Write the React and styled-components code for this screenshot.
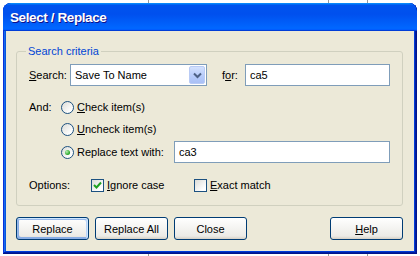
import styled, { createGlobalStyle } from "styled-components";

const GlobalStyle = createGlobalStyle`
    html, body {
        margin: 0;
        padding: 0;
        background-color: #ffffff;
        background-image:
            linear-gradient(90deg, transparent 148px, #9a9a9a 148px, #9a9a9a 149px, transparent 149px),
            linear-gradient(90deg, transparent 328px, #9a9a9a 328px, #9a9a9a 329px, transparent 329px),
            linear-gradient(90deg, transparent 367px, #9a9a9a 367px, #9a9a9a 368px, transparent 368px);
        font-family: "Liberation Sans", Arial, sans-serif;
        font-size: 11px;
        color: #000;
    }
`
const Desktop = styled.div`
    width: 420px;
    height: 256px;
    padding: 3px 0 0 3px;
    box-sizing: border-box;
`
const Window = styled.div`
    width: 414px;
    height: 251px;
    display: flex;
    flex-direction: column;
    border-radius: 8px 8px 0 0;
    background: #0831d9;
    box-shadow: inset -1px -1px #00138c, inset 1px 1px #0831d9, inset -2px -2px #001ea0,
        inset 2px 2px #166aee, inset -3px -3px #003bda, inset 3px 3px #0855dd;
    overflow: hidden;
`
const TitleBar = styled.div`
    height: 28px;
    flex: none;
    display: flex;
    align-items: center;
    padding: 1px 0 0 7px;
    box-sizing: border-box;
    border-radius: 8px 8px 0 0;
    background: linear-gradient(180deg, #0997ff, #0053ee 8%, #0050ee 40%, #0066ff 88%,
        #0066ff 93%, #005bff 95%, #003dd7 96%, #003dd7);
    color: #fff;
    font-weight: bold;
    font-size: 13.5px;
    text-shadow: 1px 1px #0f1089;
    letter-spacing: -0.4px;
`
const Body = styled.div`
    flex: 1;
    margin: 0 3px 3px;
    background: #ece9d8;
    padding: 14px 11px 0 10px;
    display: flex;
    flex-direction: column;
`
const GroupBox = styled.fieldset`
    margin: 0;
    padding: 6px 12px 9px 12px;
    border: 1px solid #d0d0bf;
    border-radius: 3px;
    display: flex;
    flex-direction: column;
    min-width: 0;
`
const Caption = styled.legend`
    color: #0046d5;
    padding: 0 2px;
    margin-left: -3px;
    line-height: 13px;
`
const Row = styled.div`
    display: flex;
    align-items: ${props => props.$top ? "flex-start" : "center"};
    height: ${props => props.$top ? "auto" : "22px"};
    margin-top: ${props => props.$gap || 0}px;
`
const Label = styled.span`
    width: ${props => props.$width}px;
    flex: none;
    line-height: 22px;
    white-space: nowrap;
`
const Key = styled.u`
    text-decoration: underline;
    text-underline-offset: 1px;
`
const Select = styled.div`
    width: 137px;
    height: 22px;
    box-sizing: border-box;
    border: 1px solid #7f9db9;
    background: #fff;
    display: flex;
    align-items: center;
    padding: 1px;
`
const SelectText = styled.span`
    flex: 1;
    padding-left: 3px;
`
const DropButton = styled.div`
    width: 16px;
    height: 18px;
    box-sizing: border-box;
    border: 1px solid #b9cbf5;
    border-radius: 2px;
    background: linear-gradient(180deg, #d3e1fd, #b5cafa 60%, #a9c0f5);
    display: flex;
    align-items: center;
    justify-content: center;
`
const TextBox = styled.div`
    height: 22px;
    box-sizing: border-box;
    border: 1px solid #7f9db9;
    background: #fff;
    padding: 0 4px;
    line-height: 20px;
    flex: ${props => props.$width ? "none" : 1};
    width: ${props => props.$width ? props.$width + "px" : "auto"};
    margin-left: ${props => props.$auto ? "auto" : (props.$left || 0) + "px"};
`
const RadioColumn = styled.div`
    flex: 1;
    display: flex;
    flex-direction: column;
`
const RadioLine = styled.div`
    display: flex;
    align-items: center;
    height: 22px;
    margin-top: ${props => props.$gap || 0}px;
`
const RadioCircle = styled.span`
    width: 13px;
    height: 13px;
    flex: none;
    box-sizing: border-box;
    border-radius: 50%;
    border: 1px solid #1c5180;
    background: linear-gradient(135deg, #dcdcd7, #fff 80%);
    display: flex;
    align-items: center;
    justify-content: center;
    margin-right: 3px;
    &::after {
        content: "";
        width: 5px;
        height: 5px;
        border-radius: 50%;
        display: ${props => props.$on ? "block" : "none"};
        background: radial-gradient(circle at 35% 35%, #b6f0b3, #21a121 70%);
    }
`
const CheckItem = styled.div`
    display: flex;
    align-items: center;
    width: ${props => props.$width ? props.$width + "px" : "auto"};
`
const CheckBox = styled.span`
    width: 13px;
    height: 13px;
    flex: none;
    box-sizing: border-box;
    border: 1px solid #1c5180;
    background: linear-gradient(135deg, #dcdcd7, #fff 80%);
    display: flex;
    align-items: center;
    justify-content: center;
    margin-right: 3px;
`
const ButtonRow = styled.div`
    display: flex;
    gap: 6px;
    margin-top: 11px;
`
const Button = styled.div`
    width: 73px;
    height: 23px;
    box-sizing: border-box;
    border: 1px solid #003c74;
    border-radius: 3px;
    background: linear-gradient(180deg, #fff, #ecebe6 86%, #d6d0c5);
    display: flex;
    align-items: center;
    justify-content: center;
    margin-left: ${props => props.$push ? "auto" : "0"};
    box-shadow: ${props => props.$default
        ? "inset -1px 1px #cee7ff, inset 1px 2px #98b8ea, inset -2px 2px #bcd4f6, inset 1px -1px #89ade4, inset 2px -2px #89ade4"
        : "none"};
`

function Radio({ on, children, gap }) {
    return (
        <RadioLine $gap={gap}>
            <RadioCircle $on={on} />
            {children}
        </RadioLine>
    )
}

export default function App() {
    return (
        <>
            <GlobalStyle />
            <Desktop>
                <Window>
                    <TitleBar>Select / Replace</TitleBar>
                    <Body>
                        <GroupBox>
                            <Caption>Search criteria</Caption>
                            <Row>
                                <Label $width={41}><Key>S</Key>earch:</Label>
                                <Select>
                                    <SelectText>Save To Name</SelectText>
                                    <DropButton>
                                        <svg width="9" height="7" viewBox="0 0 9 7">
                                            <path d="M1 1.5 L4.5 5 L8 1.5" fill="none" stroke="#4d6185" strokeWidth="2" />
                                        </svg>
                                    </DropButton>
                                </Select>
                                <Label $width={23} style={{ marginLeft: 15 }}>f<Key>o</Key>r:</Label>
                                <TextBox>ca5</TextBox>
                            </Row>
                            <Row $top $gap={10}>
                                <Label $width={32}>And:</Label>
                                <RadioColumn>
                                    <Radio><span><Key>C</Key>heck item(s)</span></Radio>
                                    <Radio><span><Key>U</Key>ncheck item(s)</span></Radio>
                                    <Radio on gap={1}>
                                        <span>Replace text with:</span>
                                        <TextBox $width={216} $auto>ca3</TextBox>
                                    </Radio>
                                </RadioColumn>
                            </Row>
                            <Row $gap={11}>
                                <Label $width={62}>Options:</Label>
                                <CheckItem $width={103}>
                                    <CheckBox>
                                        <svg width="9" height="9" viewBox="0 0 9 9">
                                            <path d="M1 4 L3.5 6.5 L8 1.5" fill="none" stroke="#21a121" strokeWidth="2" />
                                        </svg>
                                    </CheckBox>
                                    <span><Key>I</Key>gnore case</span>
                                </CheckItem>
                                <CheckItem>
                                    <CheckBox />
                                    <span><Key>E</Key>xact match</span>
                                </CheckItem>
                            </Row>
                        </GroupBox>
                        <ButtonRow>
                            <Button $default>Replace</Button>
                            <Button>Replace All</Button>
                            <Button>Close</Button>
                            <Button $push><span><Key>H</Key>elp</span></Button>
                        </ButtonRow>
                    </Body>
                </Window>
            </Desktop>
        </>
    )
}
